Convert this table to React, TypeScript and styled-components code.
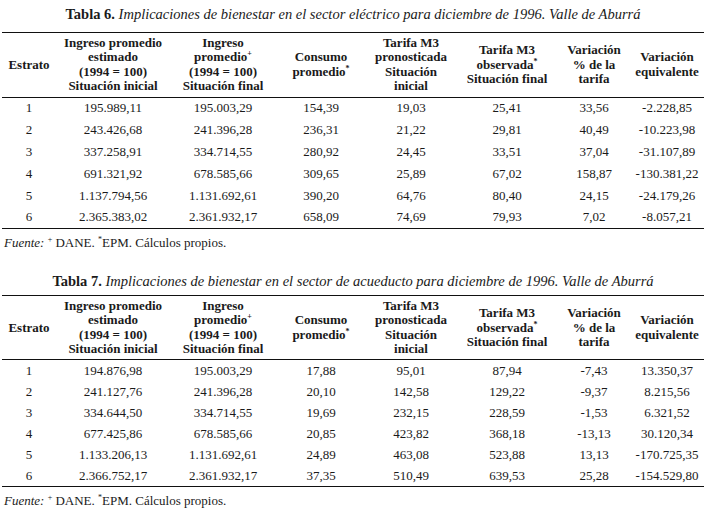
import { createGlobalStyle } from 'styled-components'
import styled from 'styled-components'

const GlobalStyle = createGlobalStyle`
  html, body { margin: 0; padding: 0; background: #fff; }
  body { font-family: "Liberation Serif", "DejaVu Serif", serif; color: #1a1a1a; }
`

const COLS = '54px 114px 106px 90px 90px 102px 72px 74px'

const Page = styled.div`
  width: 708px;
  padding: 0 4px 0 2px;
  box-sizing: border-box;
`

const Section = styled.section<{ $top: number }>`
  margin-top: ${p => p.$top}px;
`

const Caption = styled.div<{ $gap: number }>`
  text-align: center;
  font-size: 14.5px;
  line-height: 18px;
  padding-top: 5px;
  margin-bottom: ${p => p.$gap}px;
  i { font-style: italic; }
`

const Table = styled.div`
  border-top: 1.5px solid #111;
  border-bottom: 1.5px solid #111;
`

const HeadRow = styled.div<{ $h: number }>`
  display: grid;
  grid-template-columns: ${COLS};
  height: ${p => p.$h}px;
  border-bottom: 1px solid #111;
  align-items: center;
`

const HeadCell = styled.div`
  text-align: center;
  font-weight: bold;
  font-size: 13px;
  line-height: 14.5px;
  sup { font-size: 8px; line-height: 0; vertical-align: 5px; }
`

const Row = styled.div<{ $h: number }>`
  display: grid;
  grid-template-columns: ${COLS};
  height: ${p => p.$h}px;
  align-items: center;
`

const Cell = styled.div`
  text-align: center;
  font-size: 13px;
`

const Source = styled.p`
  margin: 6px 0 0 2px;
  font-size: 13px;
  line-height: 16px;
  sup { font-size: 8px; line-height: 0; vertical-align: 5px; }
`

const Header = () => (
  <>
    <HeadCell>Estrato</HeadCell>
    <HeadCell>Ingreso promedio<br />estimado<br />(1994 = 100)<br />Situación inicial</HeadCell>
    <HeadCell>Ingreso<br />promedio<sup>+</sup><br />(1994 = 100)<br />Situación final</HeadCell>
    <HeadCell>Consumo<br />promedio<sup>*</sup></HeadCell>
    <HeadCell>Tarifa M3<br />pronosticada<br />Situación<br />inicial</HeadCell>
    <HeadCell>Tarifa M3<br />observada<sup>*</sup><br />Situación final</HeadCell>
    <HeadCell>Variación<br />% de la<br />tarifa</HeadCell>
    <HeadCell>Variación<br />equivalente</HeadCell>
  </>
)

type TableData = {
  num: number
  sector: string
  rows: string[][]
  top: number
  gap: number
  headH: number
  rowH: number
}

const tables: TableData[] = [
  {
    num: 6,
    sector: 'eléctrico',
    top: 0,
    gap: 9,
    headH: 63.5,
    rowH: 21.8,
    rows: [
      ['1', '195.989,11', '195.003,29', '154,39', '19,03', '25,41', '33,56', '-2.228,85'],
      ['2', '243.426,68', '241.396,28', '236,31', '21,22', '29,81', '40,49', '-10.223,98'],
      ['3', '337.258,91', '334.714,55', '280,92', '24,45', '33,51', '37,04', '-31.107,89'],
      ['4', '691.321,92', '678.585,66', '309,65', '25,89', '67,02', '158,87', '-130.381,22'],
      ['5', '1.137.794,56', '1.131.692,61', '390,20', '64,76', '80,40', '24,15', '-24.179,26'],
      ['6', '2.365.383,02', '2.361.932,17', '658,09', '74,69', '79,93', '7,02', '-8.057,21'],
    ],
  },
  {
    num: 7,
    sector: 'de acueducto',
    top: 16,
    gap: 5,
    headH: 63,
    rowH: 21,
    rows: [
      ['1', '194.876,98', '195.003,29', '17,88', '95,01', '87,94', '-7,43', '13.350,37'],
      ['2', '241.127,76', '241.396,28', '20,10', '142,58', '129,22', '-9,37', '8.215,56'],
      ['3', '334.644,50', '334.714,55', '19,69', '232,15', '228,59', '-1,53', '6.321,52'],
      ['4', '677.425,86', '678.585,66', '20,85', '423,82', '368,18', '-13,13', '30.120,34'],
      ['5', '1.133.206,13', '1.131.692,61', '24,89', '463,08', '523,88', '13,13', '-170.725,35'],
      ['6', '2.366.752,17', '2.361.932,17', '37,35', '510,49', '639,53', '25,28', '-154.529,80'],
    ],
  },
]

export default function App() {
  return (
    <>
      <GlobalStyle />
      <Page>
        {tables.map(t => (
          <Section key={t.num} $top={t.top}>
            <Caption $gap={t.gap}>
              <b>Tabla {t.num}.</b> <i>Implicaciones de bienestar en el sector {t.sector} para diciembre de 1996. Valle de Aburrá</i>
            </Caption>
            <Table>
              <HeadRow $h={t.headH}>
                <Header />
              </HeadRow>
              {t.rows.map(r => (
                <Row key={r[0]} $h={t.rowH}>
                  {r.map((v, i) => <Cell key={i}>{v}</Cell>)}
                </Row>
              ))}
            </Table>
            <Source>
              <i>Fuente:</i> <sup>+</sup> DANE. <sup>*</sup>EPM. Cálculos propios.
            </Source>
          </Section>
        ))}
      </Page>
    </>
  )
}
